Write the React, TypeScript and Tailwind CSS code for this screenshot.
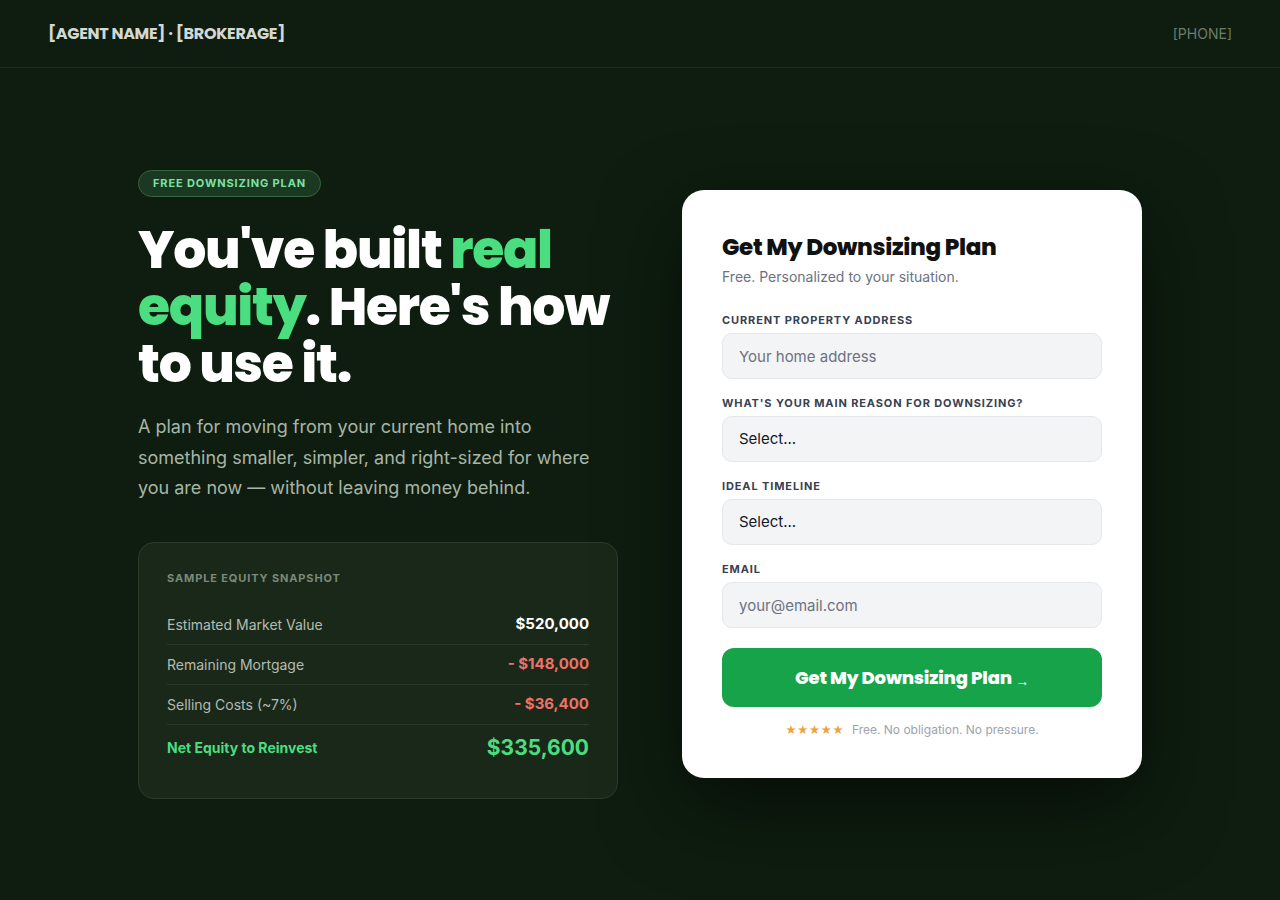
import { useState } from "react";

const display = "font-['Poppins','Inter','Noto_Sans',sans-serif]";
const body = "font-['Inter','Noto_Sans',sans-serif]";

const rows = [
  { label: "Estimated Market Value", value: "$520,000", tone: "text-white" },
  { label: "Remaining Mortgage", value: "- $148,000", tone: "text-[#f07167]" },
  { label: "Selling Costs (~7%)", value: "- $36,400", tone: "text-[#f07167]" },
];

function Field({ label, children }: { label: string; children: React.ReactNode }) {
  return (
    <label className="flex flex-col">
      <span className="mb-1.5 text-[11px] font-bold uppercase leading-[14px] tracking-[0.08em] text-[#374151]">
        {label}
      </span>
      {children}
    </label>
  );
}

const inputCls =
  "h-[46px] w-full rounded-[10px] border border-[#e5e7eb] bg-[#f3f4f6] px-4 text-[15px] text-[#111827] placeholder:text-[#6b7280] outline-none focus:border-[#16a34a]";

export default function App() {
  const [reason, setReason] = useState("");
  const [timeline, setTimeline] = useState("");

  return (
    <div className={`flex min-h-screen flex-col bg-[#0e1d0f] ${body}`}>
      <header className="flex h-[68px] items-center justify-between border-b border-[#1a2b1b] px-12">
        <span className={`${display} text-base font-bold tracking-[-0.02em] text-[#d4d8d2]`}>
          [AGENT NAME] · [BROKERAGE]
        </span>
        <span className="text-sm text-[#6b7d6b]">[PHONE]</span>
      </header>

      <main className="flex flex-1 items-center justify-center">
        <div className="flex w-[1004px] items-center gap-16">
          {/* left column */}
          <div className="w-[480px]">
            <span className="inline-flex h-[27px] items-center rounded-full border border-[#35663f] bg-[#1b3823] px-[14px] text-[11px] font-bold tracking-[0.08em] text-[#7be3a0]">
              FREE DOWNSIZING PLAN
            </span>
            <h1
              className={`${display} mt-6 text-[52px] font-extrabold leading-[1.1] tracking-[-0.024em] text-white`}
            >
              You've built <span className="text-[#4ade80]">real</span>
              <br />
              <span className="text-[#4ade80]">equity</span>. Here's how
              <br />
              to use it.
            </h1>
            <p className="mt-5 max-w-[470px] text-lg leading-[1.7] text-[#a8b5a6]">
              A plan for moving from your current home into something smaller, simpler, and
              right-sized for where you are now — without leaving money behind.
            </p>

            <div className="mt-[38px] rounded-2xl border border-[#2b3b2b] bg-[#1a281a] px-7 pb-7 pt-7">
              <p className="mb-5 text-[11px] font-bold leading-[14px] tracking-[0.08em] text-[#7b8a79]">
                SAMPLE EQUITY SNAPSHOT
              </p>
              {rows.map((r) => (
                <div
                  key={r.label}
                  className="flex h-10 items-center justify-between border-b border-[#2a392a]"
                >
                  <span className="text-sm text-[#b3bcb1]">{r.label}</span>
                  <span className={`text-[15px] font-bold ${r.tone}`}>{r.value}</span>
                </div>
              ))}
              <div className="flex h-[45px] items-center justify-between">
                <span className="text-sm font-bold text-[#4ade80]">Net Equity to Reinvest</span>
                <span className="text-[21px] font-bold text-[#4ade80]">$335,600</span>
              </div>
            </div>
          </div>

          {/* form card */}
          <div className="w-[460px] rounded-[22px] bg-white p-10 shadow-[0_30px_80px_rgba(0,0,0,0.5)]">
            <h2
              className={`${display} text-[23px] font-extrabold leading-[34px] tracking-[-0.015em] text-[#111111]`}
            >
              Get My Downsizing Plan
            </h2>
            <p className="mt-[3px] text-sm text-[#6b7280]">Free. Personalized to your situation.</p>

            <form className="mt-[26px] flex flex-col gap-[17px]" onSubmit={(e) => e.preventDefault()}>
              <Field label="Current Property Address">
                <input className={inputCls} placeholder="Your home address" />
              </Field>
              <Field label="What's your main reason for downsizing?">
                <select
                  className={`${inputCls} appearance-none`}
                  value={reason}
                  onChange={(e) => setReason(e.target.value)}
                >
                  <option value="">Select...</option>
                  <option>Empty nest</option>
                  <option>Lower maintenance</option>
                  <option>Free up equity</option>
                  <option>Retirement</option>
                </select>
              </Field>
              <Field label="Ideal Timeline">
                <select
                  className={`${inputCls} appearance-none`}
                  value={timeline}
                  onChange={(e) => setTimeline(e.target.value)}
                >
                  <option value="">Select...</option>
                  <option>0–3 months</option>
                  <option>3–6 months</option>
                  <option>6–12 months</option>
                  <option>Just exploring</option>
                </select>
              </Field>
              <Field label="Email">
                <input type="email" className={inputCls} placeholder="your@email.com" />
              </Field>

              <button
                type="submit"
                className={`${display} mt-[3px] h-[59px] w-full rounded-xl bg-[#16a34a] text-[18px] font-extrabold tracking-[-0.01em] text-white hover:bg-[#15803d]`}
              >
                Get My Downsizing Plan{" "}
                <span className="relative top-[2px] font-['Liberation_Sans',sans-serif] text-[14px] font-normal">
                  →
                </span>
              </button>
            </form>

            <p className="mt-[15px] text-center text-xs text-[#9ca3af]">
              <span className="mr-2 text-[11px] tracking-[0.02em] text-[#eea33a]">★★★★★</span>
              Free. No obligation. No pressure.
            </p>
          </div>
        </div>
      </main>
    </div>
  );
}
